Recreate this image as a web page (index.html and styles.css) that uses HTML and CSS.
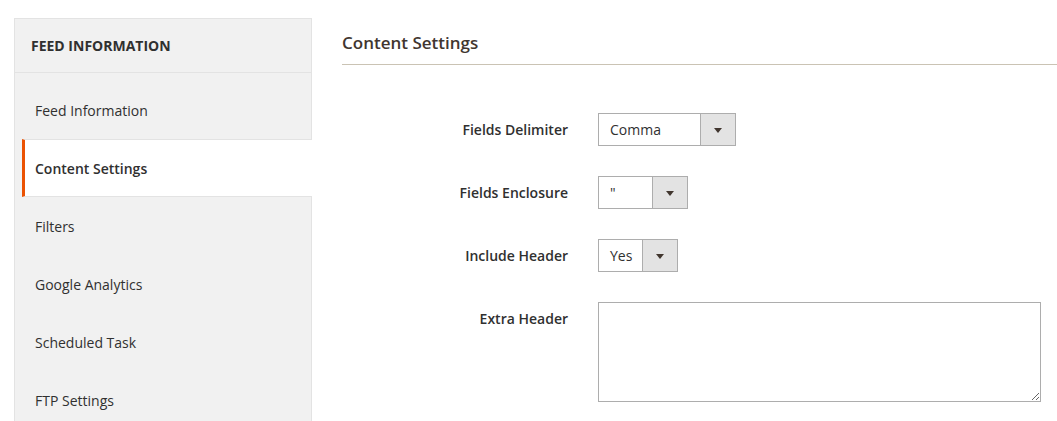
FILE: index.html
```html
<!DOCTYPE html>
<html>
<head>
<meta charset="utf-8">
<link rel="stylesheet" href="styles.css">
</head>
<body>
<div class="page">
  <aside class="nav">
    <div class="nav-title">Feed Information</div>
    <ul class="nav-items">
      <li class="nav-item">Feed Information</li>
      <li class="nav-item active">Content Settings</li>
      <li class="nav-item">Filters</li>
      <li class="nav-item">Google Analytics</li>
      <li class="nav-item">Scheduled Task</li>
      <li class="nav-item">FTP Settings</li>
    </ul>
  </aside>
  <main class="content">
    <h2 class="section-title">Content Settings</h2>
    <div class="fields">
      <div class="field">
        <label class="field-label">Fields Delimiter</label>
        <div class="select w-delim"><span class="select-value">Comma</span><span class="select-arrow"></span></div>
      </div>
      <div class="field">
        <label class="field-label">Fields Enclosure</label>
        <div class="select w-encl"><span class="select-value">"</span><span class="select-arrow"></span></div>
      </div>
      <div class="field">
        <label class="field-label">Include Header</label>
        <div class="select w-head"><span class="select-value">Yes</span><span class="select-arrow"></span></div>
      </div>
      <div class="field">
        <label class="field-label">Extra Header</label>
        <textarea class="textarea"></textarea>
      </div>
    </div>
  </main>
</div>
</body>
</html>
```

FILE: styles.css
```css
* { box-sizing: border-box; }
html, body { margin: 0; padding: 0; background: #fff; }
body {
  font-family: "Open Sans", "Liberation Sans", sans-serif;
  font-size: 14px;
  color: #303030;
  overflow: hidden;
}
.page {
  display: flex;
  align-items: flex-start;
  padding-left: 14px;
}
.nav {
  width: 298px;
  flex: none;
  margin-top: 18px;
  padding-bottom: 20px;
  background: #f1f1f1;
  border: 1px solid #e3e3e3;
}
.nav-title {
  height: 54px;
  padding: 0 16px;
  display: flex;
  align-items: center;
  border-bottom: 1px solid #e3e3e3;
  font-weight: 700;
  font-size: 14px;
  text-transform: uppercase;
  color: #303030;
}
.nav-items {
  list-style: none;
  margin: 0;
  padding: 8px 0 0 0;
}
.nav-item {
  height: 58px;
  margin-left: 7px;
  padding-left: 10px;
  border-left: 3px solid transparent;
  display: flex;
  align-items: center;
  color: #303030;
}
.nav-item.active {
  background: #fff;
  border-left-color: #eb5202;
  border-top: 1px solid #e3e3e3;
  border-bottom: 1px solid #e3e3e3;
  margin-right: -1px;
  font-weight: 600;
}
.content {
  flex: 1;
  margin-left: 30px;
}
.section-title {
  margin: 0;
  padding: 31px 0 10px;
  font-size: 17px;
  line-height: 23px;
  font-weight: 600;
  color: #41362f;
  border-bottom: 1px solid #cac3b4;
}
.fields {
  padding-top: 48px;
  display: flex;
  flex-direction: column;
  gap: 30px;
}
.field {
  display: flex;
  align-items: flex-start;
}
.field-label {
  width: 226px;
  flex: none;
  margin-right: 30px;
  text-align: right;
  font-weight: 600;
  line-height: 33px;
  color: #303030;
}
.select {
  height: 33px;
  border: 1px solid #adadad;
  background: #fff;
  display: flex;
}
.w-delim { width: 138px; }
.w-encl { width: 90px; }
.w-head { width: 80px; }
.select-value {
  flex: 1;
  padding-left: 11px;
  line-height: 31px;
  color: #303030;
}
.select-arrow {
  width: 35px;
  flex: none;
  background: #e3e3e3;
  border-left: 1px solid #adadad;
  position: relative;
}
.select-arrow::after {
  content: "";
  position: absolute;
  left: 50%;
  top: 50%;
  margin-left: -4px;
  margin-top: -2px;
  border-left: 4px solid transparent;
  border-right: 4px solid transparent;
  border-top: 5px solid #41362f;
}
.textarea {
  width: 443px;
  height: 100px;
  border: 1px solid #adadad;
  margin: 0;
  padding: 8px;
  font-family: inherit;
  font-size: 14px;
  resize: both;
}
```
